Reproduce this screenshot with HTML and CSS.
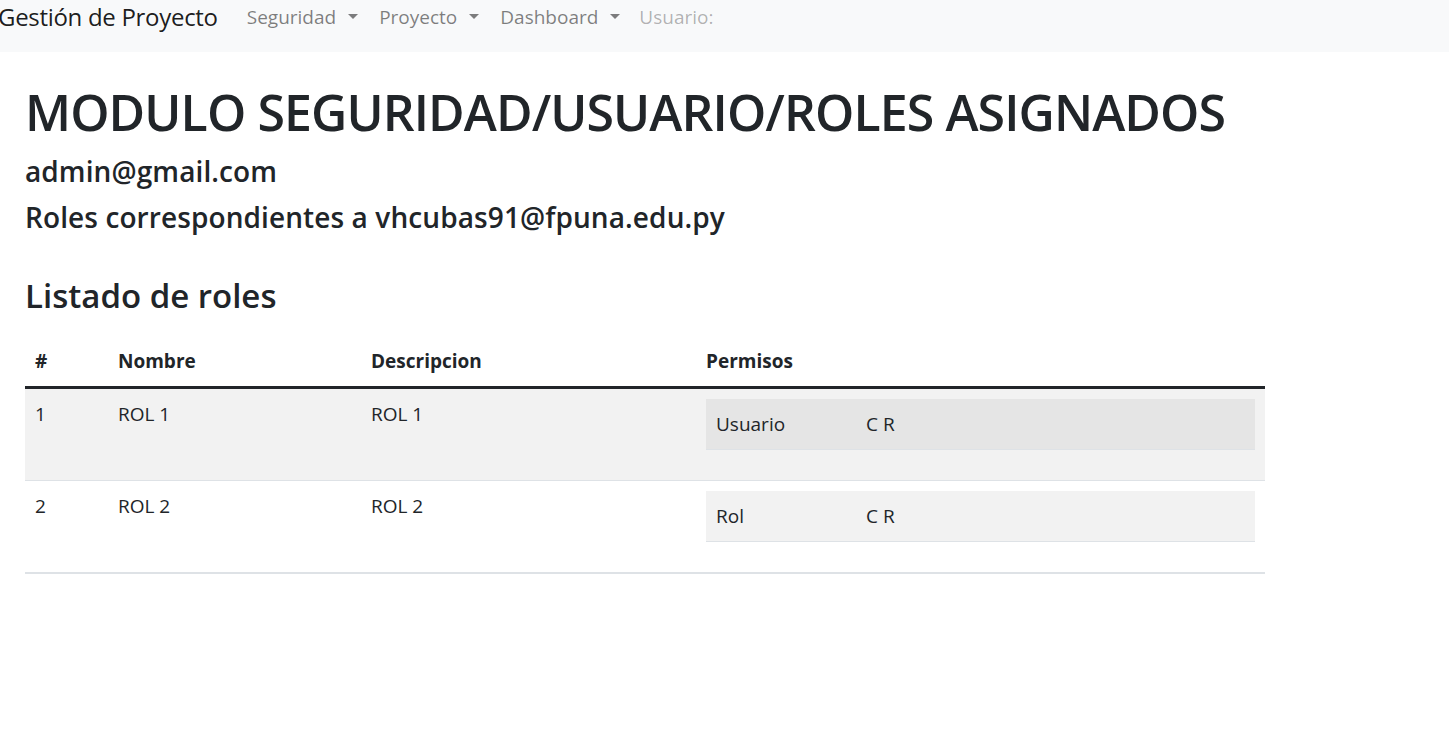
FILE: index.html
```html
<!DOCTYPE html>
<html lang="es">
<head>
<meta charset="utf-8">
<title>Roles asignados</title>
<link rel="stylesheet" href="styles.css">
</head>
<body>
<nav class="navbar">
  <a class="brand" href="#">Gestión de Proyecto</a>
  <ul class="nav">
    <li><a class="nav-link dropdown-toggle" href="#">Seguridad</a></li>
    <li><a class="nav-link dropdown-toggle" href="#">Proyecto</a></li>
    <li><a class="nav-link dropdown-toggle" href="#">Dashboard</a></li>
    <li><span class="nav-link disabled">Usuario:</span></li>
  </ul>
</nav>
<main class="content">
  <h1 class="title">MODULO SEGURIDAD/USUARIO/ROLES ASIGNADOS</h1>
  <h4 class="sub">admin@gmail.com</h4>
  <h4 class="sub">Roles correspondientes a vhcubas91@fpuna.edu.py</h4>
  <h3 class="list-title">Listado de roles</h3>
  <table class="roles">
    <thead>
      <tr>
        <th class="c-num">#</th>
        <th class="c-name">Nombre</th>
        <th class="c-desc">Descripcion</th>
        <th class="c-perm">Permisos</th>
      </tr>
    </thead>
    <tbody>
      <tr class="striped">
        <td>1</td>
        <td>ROL 1</td>
        <td>ROL 1</td>
        <td>
          <table class="perms">
            <tr class="striped"><td class="p-name">Usuario</td><td>C R</td></tr>
          </table>
        </td>
      </tr>
      <tr>
        <td>2</td>
        <td>ROL 2</td>
        <td>ROL 2</td>
        <td>
          <table class="perms">
            <tr class="striped"><td class="p-name">Rol</td><td>C R</td></tr>
          </table>
        </td>
      </tr>
    </tbody>
  </table>
</main>
</body>
</html>
```

FILE: styles.css
```css
* { box-sizing: border-box; }
html, body { margin: 0; padding: 0; }
body {
  font-family: "Open Sans", "Noto Sans", "Liberation Sans", sans-serif;
  font-size: 19px;
  line-height: 30px;
  color: #212529;
  background: #fff;
  overflow: hidden;
}
a { text-decoration: none; }

.navbar {
  height: 52px;
  background: #f8f9fa;
  display: flex;
  align-items: flex-start;
  padding-top: 2px;
}
.brand {
  margin-left: -2px;
  margin-right: 19px;
  font-size: 24px;
  line-height: 30px;
  letter-spacing: -0.3px;
  color: rgba(0,0,0,.9);
  white-space: nowrap;
}
.nav {
  list-style: none;
  margin: 0;
  padding: 0;
  display: flex;
}
.nav-link {
  display: block;
  padding: 0 11px 0 10px;
  font-size: 19px;
  line-height: 30px;
  color: rgba(0,0,0,.5);
  white-space: nowrap;
}
.nav-link.disabled { color: rgba(0,0,0,.3); margin-left: -2px; }
.dropdown-toggle::after {
  content: "";
  display: inline-block;
  margin-left: 12px;
  vertical-align: 5px;
  border-top: 5px solid;
  border-right: 5px solid transparent;
  border-left: 5px solid transparent;
  border-bottom: 0;
}

.content { padding: 0 25px; }
.title {
  margin: 30px 0 11px;
  font-size: 50px;
  line-height: 60px;
  font-weight: 600;
  letter-spacing: -0.9px;
}
.sub {
  margin: 0 0 10px;
  font-size: 28px;
  line-height: 36px;
  font-weight: 600;
  letter-spacing: 0.1px;
}
.list-title {
  margin: 40px 0 20px;
  font-size: 33px;
  line-height: 41px;
  font-weight: 600;
}

.roles {
  width: 1240px;
  border-collapse: collapse;
  border-bottom: 2px solid #dee2e6;
}
.roles th, .roles td {
  padding: 10px;
  text-align: left;
  vertical-align: top;
}
.roles th {
  font-weight: 700;
  border-bottom: 3px solid #212529;
}
.roles > tbody > tr + tr > td { border-top: 1px solid #dee2e6; }
.c-num { width: 83px; }
.c-name { width: 253px; }
.c-desc { width: 335px; }
.striped { background: rgba(0,0,0,.05); }

.perms {
  width: 100%;
  border-collapse: collapse;
  margin-bottom: 20px;
}
.perms td {
  padding: 10px;
  border-bottom: 1px solid #dee2e6;
}
.p-name { width: 150px; }
```
